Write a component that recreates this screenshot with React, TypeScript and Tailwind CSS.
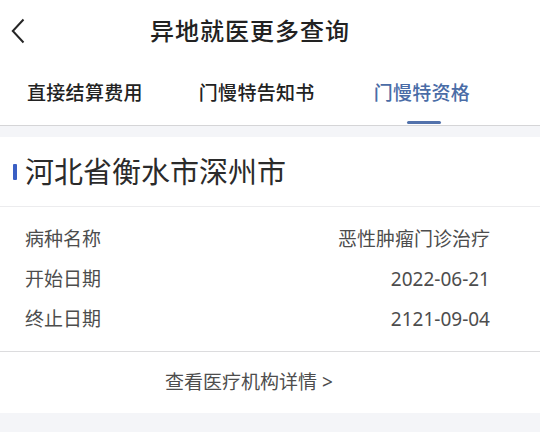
const font = "font-['Noto_Sans','Noto_Sans_CJK_SC',sans-serif]";

const rows = [
  { label: "病种名称", value: "恶性肿瘤门诊治疗" },
  { label: "开始日期", value: "2022-06-21" },
  { label: "终止日期", value: "2121-09-04" },
];

export default function App() {
  return (
    <div className={`w-[549px] h-[432px] bg-white overflow-hidden ${font}`}>
      <div className="w-[540px]">
        {/* header */}
        <div className="h-[62px] flex items-center">
          <svg width="14" height="26" viewBox="0 0 14 26" className="ml-[11px]" fill="none">
            <polyline points="12.5,1.5 1.8,13 12.5,24.5" stroke="#262626" strokeWidth="2" />
          </svg>
          <h1 className="ml-[125px] text-[24px] tracking-[1px] font-medium text-[#222] leading-none">
            异地就医更多查询
          </h1>
        </div>

        {/* tabs */}
        <div className="h-[63px] flex items-center text-[19px] font-medium text-[#222] leading-none">
          <span className="ml-[27px] tracking-[0.3px]">直接结算费用</span>
          <span className="ml-[56px] tracking-[0.3px]">门慢特告知书</span>
          <div className="ml-[59px] relative h-full flex items-center">
            <span className="text-[#4a6ca6] tracking-[0.3px]">门慢特资格</span>
            <span className="absolute bottom-[1px] left-[33px] w-[34px] h-[3px] rounded-full bg-[#5272ac]" />
          </div>
        </div>
        <div className="h-px bg-[#d5d5d7]" />
        <div className="h-[11px] bg-[#f4f5f8]" />

        {/* region */}
        <div className="h-[70px] flex items-center border-b border-[#ececee]">
          <span className="ml-[13px] w-[4px] h-[16px] bg-[#3a5fc4] rounded-[1px]" />
          <span className="ml-[8px] text-[29px] text-[#2b2b2b] leading-none">河北省衡水市深州市</span>
        </div>

        {/* details */}
        <div className="pt-[12px] pb-[12px] border-b border-[#dcdcde]">
          {rows.map((r) => (
            <div key={r.label} className="h-[40px] flex items-center justify-between pl-[25px] pr-[50px] text-[19px] text-[#4d4d4d]">
              <span>{r.label}</span>
              <span>{r.value}</span>
            </div>
          ))}
        </div>

        <div className="h-[61px] flex items-center">
          <span className="ml-[165px] text-[19px] text-[#4d4d4d]">查看医疗机构详情 &gt;</span>
        </div>
        <div className="h-[30px] bg-[#f4f5f8]" />
      </div>
    </div>
  );
}
